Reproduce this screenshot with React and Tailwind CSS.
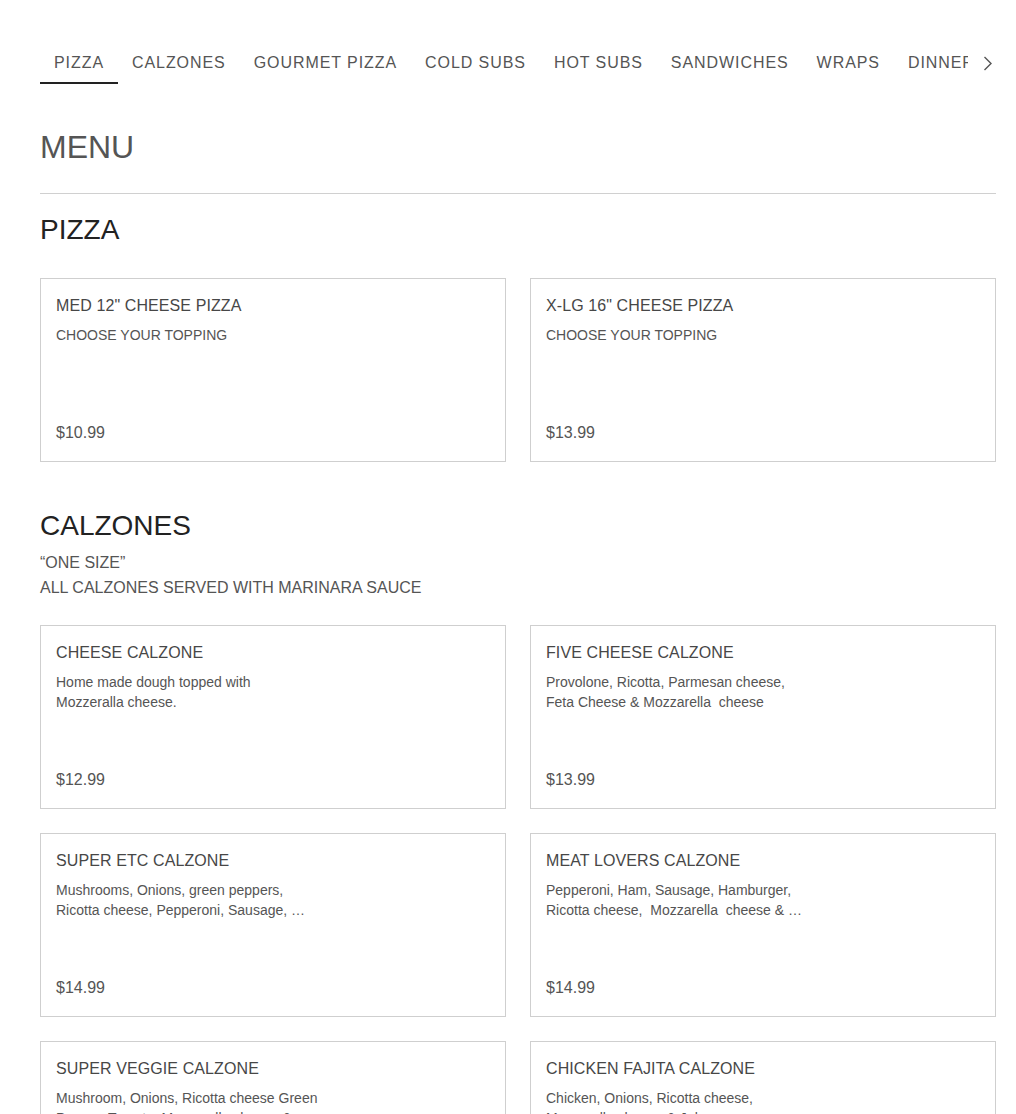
const tabs = [
  "PIZZA",
  "CALZONES",
  "GOURMET PIZZA",
  "COLD SUBS",
  "HOT SUBS",
  "SANDWICHES",
  "WRAPS",
  "DINNERS",
  "SIDES",
];

const pizzas = [
  { name: 'MED 12" CHEESE PIZZA', desc: ["CHOOSE YOUR TOPPING"], price: "$10.99" },
  { name: 'X-LG 16" CHEESE PIZZA', desc: ["CHOOSE YOUR TOPPING"], price: "$13.99" },
];

const calzones = [
  {
    name: "CHEESE CALZONE",
    desc: ["Home made dough topped with", "Mozzeralla cheese."],
    price: "$12.99",
  },
  {
    name: "FIVE CHEESE CALZONE",
    desc: ["Provolone, Ricotta, Parmesan cheese,", "Feta Cheese & Mozzarella  cheese"],
    price: "$13.99",
  },
  {
    name: "SUPER ETC CALZONE",
    desc: ["Mushrooms, Onions, green peppers,", "Ricotta cheese, Pepperoni, Sausage, …"],
    price: "$14.99",
  },
  {
    name: "MEAT LOVERS CALZONE",
    desc: ["Pepperoni, Ham, Sausage, Hamburger,", "Ricotta cheese,  Mozzarella  cheese & …"],
    price: "$14.99",
  },
  {
    name: "SUPER VEGGIE CALZONE",
    desc: ["Mushroom, Onions, Ricotta cheese Green", "Pepper, Tomato, Mozzarella cheese & …"],
    price: "$15.99",
  },
  {
    name: "CHICKEN FAJITA CALZONE",
    desc: ["Chicken, Onions, Ricotta cheese,", "Mozzarella cheese & Jalapenos"],
    price: "$15.99",
  },
];

const ItemCard = ({ item }) => {
  return (
    <div className="flex h-[184px] flex-col border border-[#cfcfcf] bg-white px-[15px] pt-[17px] pb-[18px]">
      <div className="text-[16px] leading-5 tracking-[0.1px] text-[#474747]">{item.name}</div>
      <div className="mt-[9px] text-[14px] leading-5 text-[#555]">
        {item.desc.map((line) => (
          <div key={line} className="whitespace-pre">
            {line}
          </div>
        ))}
      </div>
      <div className="mt-auto text-[16px] leading-5 text-[#555]">{item.price}</div>
    </div>
  );
};

const App = () => {
  return (
    <div
      className="min-h-screen bg-white pt-[38px] pr-5 pl-10"
      style={{ fontFamily: '"Liberation Sans", Arial, sans-serif' }}
    >
      <nav className="flex items-start">
        <div className="flex w-[928px] overflow-hidden">
          {tabs.map((tab, i) => (
            <div
              key={tab}
              className={
                i === 0
                  ? "shrink-0 whitespace-nowrap border-b-2 border-[#222] px-[14px] pt-[13px] pb-[7px] text-[16px] leading-6 tracking-[0.93px] text-[#555]"
                  : "shrink-0 whitespace-nowrap border-b-2 border-transparent px-[14px] pt-[13px] pb-[7px] text-[16px] leading-6 tracking-[0.93px] text-[#555]"
              }
            >
              {tab}
            </div>
          ))}
        </div>
        <button className="flex h-[46px] flex-1 items-center justify-end pt-[4px] pr-[3px]">
          <svg width="10" height="15" viewBox="0 0 10 15" fill="none">
            <path d="M1.5 1 L8 7.5 L1.5 14" stroke="#555" strokeWidth="1.4" />
          </svg>
        </button>
      </nav>

      <h1 className="mt-[43px] text-[32px] leading-10 text-[#555]">MENU</h1>
      <hr className="mt-[26px] border-t border-[#d0d0d0]" />

      <section className="mt-5">
        <h2 className="text-[28px] leading-8 text-[#222]">PIZZA</h2>
        <div className="mt-8 grid grid-cols-2 gap-6">
          {pizzas.map((p) => (
            <ItemCard key={p.name} item={p} />
          ))}
        </div>
      </section>

      <section className="mt-12">
        <h2 className="text-[28px] leading-8 text-[#222]">CALZONES</h2>
        <div className="mt-2 text-[16px] leading-[25px] text-[#555]">
          <div>“ONE SIZE”</div>
          <div>ALL CALZONES SERVED WITH MARINARA SAUCE</div>
        </div>
        <div className="mt-[25px] grid grid-cols-2 gap-6 pb-10">
          {calzones.map((c) => (
            <ItemCard key={c.name} item={c} />
          ))}
        </div>
      </section>
    </div>
  );
};

export default App;
